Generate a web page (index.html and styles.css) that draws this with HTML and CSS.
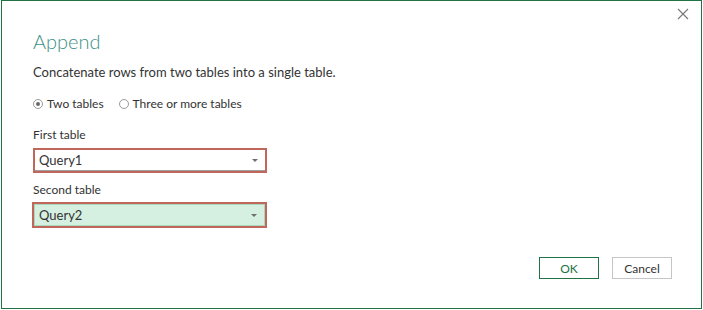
FILE: index.html
```html
<!DOCTYPE html>
<html>
<head>
<meta charset="utf-8">
<link rel="stylesheet" href="styles.css">
</head>
<body>
<div class="dialog">
  <button class="close" aria-label="Close">
    <svg width="12" height="12" viewBox="0 0 12 12"><path d="M1 1 L11 11 M11 1 L1 11" stroke="#777" stroke-width="1.1" fill="none"/></svg>
  </button>
  <div class="title">Append</div>
  <div class="desc">Concatenate rows from two tables into a single table.</div>
  <div class="radios">
    <label class="radio"><span class="circle checked"></span>Two tables</label>
    <label class="radio"><span class="circle"></span>Three or more tables</label>
  </div>
  <div class="label first">First table</div>
  <div class="select sel1"><div class="inner"><span>Query1</span><span class="arrow"></span></div></div>
  <div class="label second">Second table</div>
  <div class="select sel2"><div class="inner"><span>Query2</span><span class="arrow"></span></div></div>
  <div class="buttons">
    <button class="btn ok">OK</button>
    <button class="btn cancel">Cancel</button>
  </div>
</div>
</body>
</html>
```
FILE: styles.css
```css
html, body {
  margin: 0;
  padding: 0;
  background: #fff;
}
body {
  font-family: "Segoe UI", Lato, "Open Sans", sans-serif;
  color: #333;
}
.dialog {
  position: relative;
  margin-left: 1px;
  width: 701px;
  height: 309px;
  box-sizing: border-box;
  border: 1px solid #217346;
  padding: 0 0 0 31px;
  display: flex;
  flex-direction: column;
  align-items: flex-start;
}
.close {
  position: absolute;
  top: 7px;
  right: 12px;
  width: 12px;
  height: 12px;
  padding: 0;
  border: 0;
  background: none;
  display: block;
}
.close svg { display: block; }
.title {
  margin-top: 28px;
  font-size: 20px;
  line-height: 24px;
  font-weight: 300;
  color: #3d8f86;
}
.desc {
  margin-top: 10px;
  font-size: 13px;
  line-height: 18px;
  color: #333;
}
.radios {
  margin-top: 15px;
  display: flex;
  gap: 15px;
  font-size: 12px;
  line-height: 16px;
  color: #333;
}
.radio {
  display: flex;
  align-items: center;
}
.circle {
  width: 10px;
  height: 10px;
  box-sizing: border-box;
  border: 1px solid #9a9a9a;
  border-radius: 50%;
  margin-right: 4px;
  position: relative;
}
.circle.checked::after {
  content: "";
  position: absolute;
  left: 2px;
  top: 2px;
  width: 4px;
  height: 4px;
  border-radius: 50%;
  background: #6a6a6a;
}
.label {
  font-size: 12px;
  line-height: 16px;
  color: #333;
}
.label.first { margin-top: 15px; }
.label.second { margin-top: 9px; }
.select {
  box-sizing: border-box;
  border: 2px solid #c0675c;
  font-size: 13px;
  color: #333;
}
.sel1 {
  margin-top: 5px;
  width: 234px;
  height: 25px;
}
.sel2 {
  margin-top: 4px;
  margin-left: -1px;
  width: 235px;
  height: 26px;
}
.inner {
  height: 100%;
  box-sizing: border-box;
  display: flex;
  align-items: center;
  justify-content: space-between;
  padding: 0 7px 0 4px;
}
.sel1 .inner {
  background: #fff;
  border-bottom: 1px solid #a0a0a0;
}
.sel2 .inner {
  background: #d5efe0;
  border: 1px solid #a9d9ba;
  padding-left: 4px;
}
.arrow {
  width: 0;
  height: 0;
  border-left: 3px solid transparent;
  border-right: 3px solid transparent;
  border-top: 3px solid #6f6f6f;
}
.buttons {
  margin-top: 29px;
  align-self: flex-end;
  margin-right: 29px;
  display: flex;
  gap: 13px;
}
.btn {
  width: 60px;
  height: 22px;
  box-sizing: border-box;
  background: #fff;
  font-family: "Segoe UI", Lato, "Open Sans", sans-serif;
  font-size: 12px;
  padding: 0;
}
.ok {
  border: 1px solid #217346;
  color: #217346;
}
.cancel {
  border: 1px solid #c6c6c6;
  color: #333;
}
```
